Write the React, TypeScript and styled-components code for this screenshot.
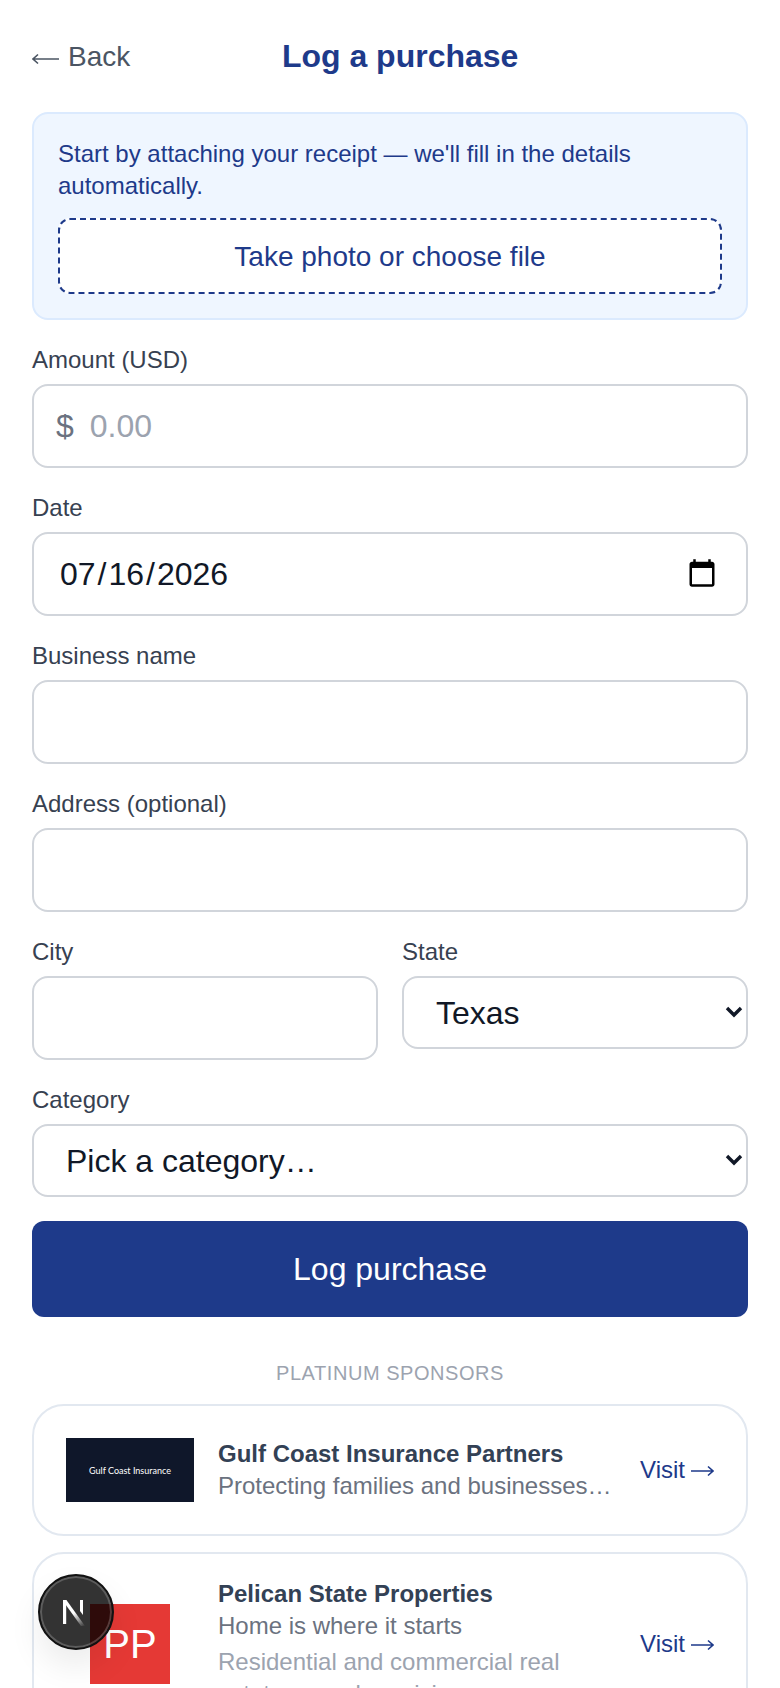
import React from 'react'
import styled, { createGlobalStyle } from 'styled-components'

const GlobalStyle = createGlobalStyle`
  * {
    box-sizing: border-box;
  }
  html, body {
    margin: 0;
    padding: 0;
    height: 100%;
    overflow: hidden;
    background: #fff;
    font-family: 'Liberation Sans', Arial, sans-serif;
  }
`

const Page = styled.main`
  padding: 32px 32px 48px;
`

const Header = styled.header`
  display: flex;
  align-items: center;
  justify-content: space-between;
  height: 48px;
  margin-bottom: 32px;
`

const BackLink = styled.a`
  display: flex;
  align-items: center;
  gap: 9px;
  padding-top: 2px;
  font-size: 28px;
  color: #4b5563;
`

const Title = styled.h1`
  margin: 0;
  font-size: 32px;
  font-weight: 700;
  color: #1e3a8a;
`

const HeaderSpacer = styled.span`
  width: 78px;
`

const ReceiptPanel = styled.section`
  border: 2px solid #dbeafe;
  border-radius: 16px;
  background: #eff6ff;
  padding: 24px;
  margin-bottom: 24px;
`

const ReceiptHint = styled.p`
  margin: 0 0 16px;
  font-size: 24px;
  line-height: 32px;
  color: #1e3a8a;
`

const UploadButton = styled.button`
  display: block;
  width: 100%;
  height: 76px;
  border: 2px dashed #1e3a8a;
  border-radius: 12px;
  padding-top: 2px;
  background: #fff;
  color: #1e3a8a;
  font-family: inherit;
  font-size: 28px;
`

const Form = styled.form`
  display: flex;
  flex-direction: column;
  gap: 24px;
`

const Field = styled.div`
  flex: 1;
  min-width: 0;
`

const Label = styled.label`
  display: block;
  height: 32px;
  margin-bottom: 8px;
  font-size: 24px;
  line-height: 32px;
  color: #374151;
`

const TextInput = styled.input`
  display: block;
  width: 100%;
  height: 84px;
  border: 2px solid #d1d5db;
  border-radius: 16px;
  padding: 0 24px;
  background: #fff;
  font-family: inherit;
  font-size: 32px;
  color: #111827;
  outline: none;
`

const AmountBox = styled.div`
  display: flex;
  align-items: center;
  gap: 16px;
  height: 84px;
  border: 2px solid #d1d5db;
  border-radius: 16px;
  padding: 0 22px;
`

const Currency = styled.span`
  font-size: 32px;
  color: #6b7280;
`

const AmountInput = styled.input`
  flex: 1;
  min-width: 0;
  border: 0;
  padding: 0;
  outline: none;
  font-family: inherit;
  font-size: 32px;
  color: #111827;

  &::placeholder {
    color: #9ca3af;
    opacity: 1;
  }
`

/* native control at zoom 2, so the picker glyph comes out at the reference's scale */
const DateInput = styled.input`
  display: block;
  width: 100%;
  height: 42px;
  zoom: 2;
  border: 1px solid #d1d5db;
  border-radius: 8px;
  padding: 0 12px;
  background: #fff;
  font-family: inherit;
  font-size: 16px;
  color: #111827;
  outline: none;
`

const SelectWrap = styled.div`
  position: relative;
`

const Select = styled.select`
  display: block;
  width: 100%;
  height: 73px;
  appearance: none;
  border: 2px solid #d1d5db;
  border-radius: 16px;
  padding: 0 32px;
  background: #fff;
  font-family: inherit;
  font-size: 32px;
  color: #111827;
  outline: none;
`

const Chevron = styled.svg`
  position: absolute;
  right: 5px;
  top: 30px;
  pointer-events: none;
`

const Row = styled.div`
  display: flex;
  gap: 24px;
  align-items: flex-start;
`

const SubmitButton = styled.button`
  height: 96px;
  border: 0;
  border-radius: 12px;
  background: #1e3a8a;
  color: #fff;
  font-family: inherit;
  font-size: 32px;
`

const SponsorsHeading = styled.h2`
  margin: 42px 0 17px;
  font-size: 20px;
  line-height: 28px;
  font-weight: 400;
  letter-spacing: 0.55px;
  text-align: center;
  text-transform: uppercase;
  color: #9ca3af;
`

const SponsorList = styled.div`
  display: flex;
  flex-direction: column;
  gap: 16px;
`

const SponsorCard = styled.article<{ $compact?: boolean }>`
  display: flex;
  align-items: center;
  gap: 24px;
  border: 2px solid #e2e8f0;
  border-radius: 32px;
  padding: ${({ $compact }) => ($compact ? '24px 32px' : '32px')};
  background: #fff;
`

const LogoSlot = styled.div`
  flex: 0 0 128px;
  display: flex;
  justify-content: center;
`

const BannerLogo = styled.div`
  display: flex;
  align-items: center;
  justify-content: center;
  width: 128px;
  height: 64px;
  background: #0f172a;
  color: #fff;
  font-family: Lato, sans-serif;
  font-size: 9px;
`

const SquareLogo = styled.div`
  display: flex;
  align-items: center;
  justify-content: center;
  width: 80px;
  height: 80px;
  background: #e53935;
  color: #fff;
  font-size: 40px;
`

const SponsorBody = styled.div`
  flex: 1;
  min-width: 0;
`

const SponsorName = styled.div`
  font-size: 24px;
  line-height: 32px;
  font-weight: 700;
  color: #334155;
`

const SponsorTagline = styled.div`
  font-size: 24px;
  line-height: 32px;
  color: #6b7280;
  white-space: nowrap;
  overflow: hidden;
  text-overflow: ellipsis;
`

const SponsorDescription = styled.div`
  margin-top: 4px;
  font-size: 24px;
  line-height: 32px;
  color: #9ca3af;
`

const VisitLink = styled.a`
  flex: none;
  display: flex;
  align-items: center;
  gap: 6px;
  font-size: 24px;
  color: #1e3a8a;
`

const ArrowSvg = styled.svg<{ $drop: number }>`
  flex: none;
  transform: translateY(${({ $drop }) => $drop}px);
`

const DevBadge = styled.div`
  position: fixed;
  left: 38px;
  top: 1574px;
  width: 76px;
  height: 76px;
  display: flex;
  align-items: center;
  justify-content: center;
  border-radius: 50%;
  border: 2px solid #111;
  background: rgba(0, 0, 0, 0.8);
  box-shadow: inset 0 0 0 2px rgba(255, 255, 255, 0.2), 0 16px 32px rgba(0, 0, 0, 0.08);
`

const ThinArrow = ({ dir, size, drop }: { dir: 'left' | 'right'; size: number; drop: number }) => (
  <ArrowSvg $drop={drop} width={size} height="14" viewBox={`0 0 ${size} 14`} fill="none" stroke="currentColor" strokeWidth="1.6">
    {dir === 'left' ? (
      <path d={`M${size} 7H1M6 2.5 1 7l5 4.5`} />
    ) : (
      <path d={`M0 7h${size - 1}M${size - 6} 2.5 ${size - 1} 7l-5 4.5`} />
    )}
  </ArrowSvg>
)

const SelectChevron = () => (
  <Chevron width="18" height="12" viewBox="0 0 18 12" fill="none" stroke="#111827" strokeWidth="3.4">
    <path d="M2 2l7 7 7-7" />
  </Chevron>
)

const sponsors = [
  {
    name: 'Gulf Coast Insurance Partners',
    tagline: 'Protecting families and businesses across the coast',
    logo: <BannerLogo>Gulf Coast Insurance</BannerLogo>,
  },
  {
    name: 'Pelican State Properties',
    tagline: 'Home is where it starts',
    description: 'Residential and commercial real estate owned provisions',
    logo: <SquareLogo>PP</SquareLogo>,
  },
]

const App: React.FC = () => {
  return (
    <Page>
      <GlobalStyle />
      <Header>
        <BackLink>
          <ThinArrow dir="left" size={27} drop={2} />
          Back
        </BackLink>
        <Title>Log a purchase</Title>
        <HeaderSpacer />
      </Header>

      <ReceiptPanel>
        <ReceiptHint>Start by attaching your receipt — we'll fill in the details automatically.</ReceiptHint>
        <UploadButton type="button">Take photo or choose file</UploadButton>
      </ReceiptPanel>

      <Form>
        <Field>
          <Label>Amount (USD)</Label>
          <AmountBox>
            <Currency>$</Currency>
            <AmountInput placeholder="0.00" />
          </AmountBox>
        </Field>
        <Field>
          <Label>Date</Label>
          <DateInput type="date" defaultValue="2026-07-16" />
        </Field>
        <Field>
          <Label>Business name</Label>
          <TextInput />
        </Field>
        <Field>
          <Label>Address (optional)</Label>
          <TextInput />
        </Field>
        <Row>
          <Field>
            <Label>City</Label>
            <TextInput />
          </Field>
          <Field>
            <Label>State</Label>
            <SelectWrap>
              <Select defaultValue="TX">
                <option value="TX">Texas</option>
              </Select>
              <SelectChevron />
            </SelectWrap>
          </Field>
        </Row>
        <Field>
          <Label>Category</Label>
          <SelectWrap>
            <Select defaultValue="">
              <option value="">Pick a category…</option>
            </Select>
            <SelectChevron />
          </SelectWrap>
        </Field>
        <SubmitButton type="button">Log purchase</SubmitButton>
      </Form>

      <SponsorsHeading>Platinum sponsors</SponsorsHeading>
      <SponsorList>
        {sponsors.map((sponsor) => (
          <SponsorCard key={sponsor.name} $compact={!!sponsor.description}>
            <LogoSlot>{sponsor.logo}</LogoSlot>
            <SponsorBody>
              <SponsorName>{sponsor.name}</SponsorName>
              <SponsorTagline>{sponsor.tagline}</SponsorTagline>
              {sponsor.description && <SponsorDescription>{sponsor.description}</SponsorDescription>}
            </SponsorBody>
            <VisitLink>
              Visit
              <ThinArrow dir="right" size={23} drop={1} />
            </VisitLink>
          </SponsorCard>
        ))}
      </SponsorList>

      <DevBadge>
        <svg width="32" height="32" viewBox="3 0 32 32" fill="none">
          <defs>
            <linearGradient id="nFade" x1="14" y1="10" x2="28" y2="30" gradientUnits="userSpaceOnUse">
              <stop offset="0.3" stopColor="#fff" />
              <stop offset="1" stopColor="#fff" stopOpacity="0" />
            </linearGradient>
          </defs>
          <path d="M6 4h3.2v24H6z" fill="#fff" />
          <path d="M6 4h3.4L28 30h-4L6 5z" fill="url(#nFade)" />
          <path d="M23 4h3v15l-3-4z" fill="#fff" />
        </svg>
      </DevBadge>
    </Page>
  )
}

export default App
